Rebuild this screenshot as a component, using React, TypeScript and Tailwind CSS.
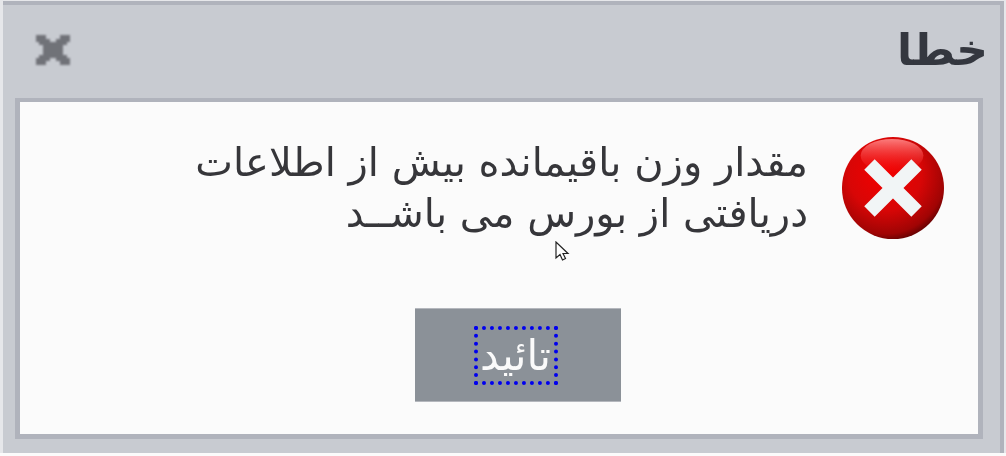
export default function App() {
  return (
    <div className="relative w-[1006px] h-[456px] bg-[#fbfbfb] overflow-hidden" style={{ fontFamily: '"DejaVu Sans", sans-serif' }}>
      <div className="h-[453px] w-[1006px] bg-[#e6e7ea] pl-[3px] pr-[1px]">
        <div className="flex flex-col h-[453px] w-[1001px] pt-[1px]">
          <div className="flex flex-col h-[452px] border-t-[4px] border-r-[4px] border-[#b0b3bc] bg-[#c8cbd1]">
            <div className="flex h-[93px] shrink-0 items-center justify-between pl-[33px] pr-[12px] pb-[3px]">
              <svg className="blur-[1px]" width="34" height="30" viewBox="2 3 30 26" shapeRendering="crispEdges">
                <path d="M2 3h9v3h3v3h6V6h3V3h9v6h-3v3h-3v8h3v3h3v6h-9v-3h-3v-3h-6v3h-3v3H2v-6h3v-3h3v-8H5V9H2z" fill="#707278" />
              </svg>
              <span dir="rtl" className="text-[44px] leading-none font-bold text-[#34373f] blur-[0.6px]">خطا</span>
            </div>
            <div className="ml-[12px] h-[341px] w-[968px] shrink-0 border-[5px] border-t-[4px] border-[#b0b3bc] bg-[#fbfbfb]">
              <div className="flex h-[332px] flex-col">
                <div dir="rtl" className="flex items-start gap-[33px] pr-[33px] pt-[34px]">
                  <svg className="shrink-0 blur-[0.5px]" width="104" height="104" viewBox="0 0 106 106">
                    <defs>
                      <radialGradient id="ball" cx="42%" cy="36%" r="72%">
                        <stop offset="0" stopColor="#f40000" />
                        <stop offset="0.5" stopColor="#d80606" />
                        <stop offset="0.82" stopColor="#a00404" />
                        <stop offset="1" stopColor="#380101" />
                      </radialGradient>
                      <linearGradient id="shine" x1="0" y1="0" x2="0" y2="1">
                        <stop offset="0" stopColor="#ff8a8a" stopOpacity="0.9" />
                        <stop offset="1" stopColor="#ff2020" stopOpacity="0.05" />
                      </linearGradient>
                    </defs>
                    <circle cx="53" cy="53" r="52" fill="url(#ball)" />
                    <ellipse cx="52" cy="20" rx="32" ry="17" fill="url(#shine)" />
                    <path d="M29 29L77 77M77 29L29 77" stroke="#f1f5f6" strokeWidth="15" />
                  </svg>
                  <p className="w-[660px] text-[40px] leading-[51px] text-[#36363a] mt-[1px] blur-[0.4px]">
                    مقدار وزن باقیمانده بیش از اطلاعات دریافتی از بورس می باشــد
                  </p>
                </div>
                <div className="mt-auto mb-[32px] flex justify-center pl-[38px]">
                  <button className="flex h-[94px] w-[206px] items-center justify-center border-y border-[#b4b7bd] bg-[#8b9198]">
                    <span dir="rtl" className="mr-[5px] mt-[1px] flex h-[59px] w-[84px] items-center justify-center overflow-visible border-[4px] border-dotted border-[#0000ee] text-[42px] leading-none text-[#fafafa] blur-[0.3px]">تائید</span>
                  </button>
                </div>
              </div>
            </div>
          </div>
        </div>
      </div>
      <svg className="absolute left-[555px] top-[241px]" width="15" height="21" viewBox="0 0 15 21">
        <path d="M1 1v16l4-3.5 2.5 5.5 3-1.5-2.5-5h5z" fill="#fff" stroke="#222" strokeWidth="1.2" />
      </svg>
    </div>
  );
}
